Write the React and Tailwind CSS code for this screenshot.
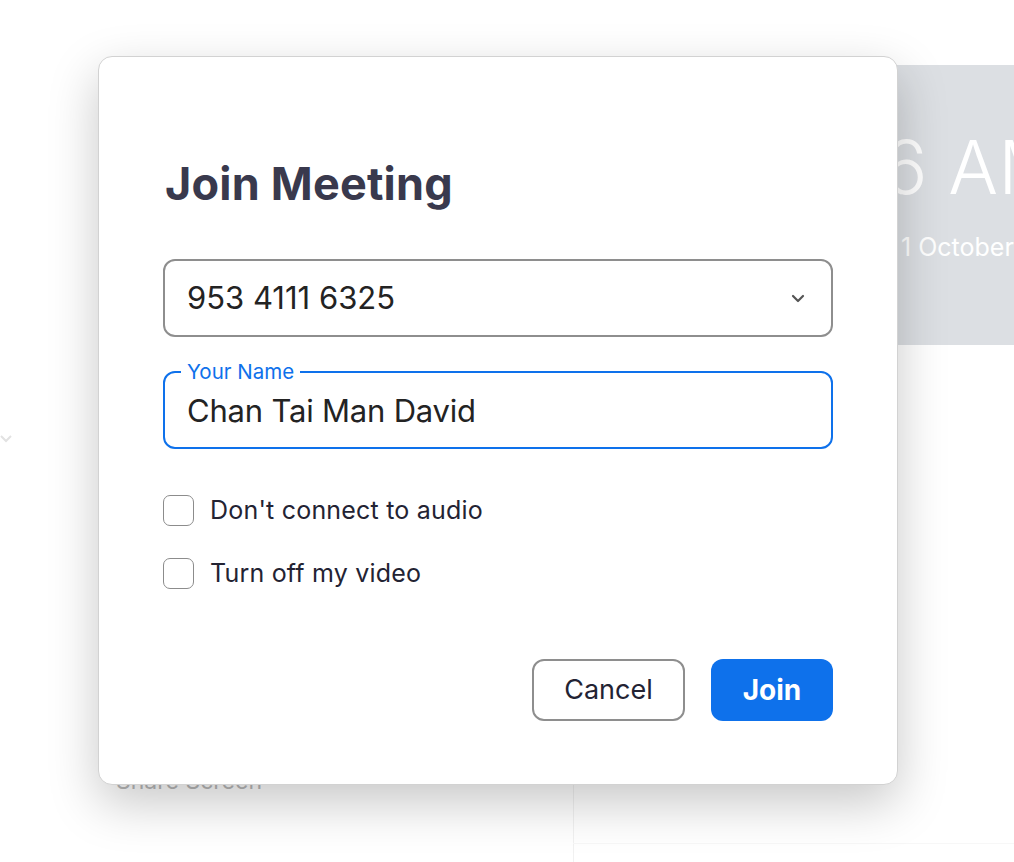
import React from 'react';

function Checkbox({ label }) {
  return (
    <label className="flex items-center gap-4 cursor-pointer">
      <span className="w-[31px] h-[31px] rounded-[7px] border-[1.5px] border-[#8c8c8c] bg-white" />
      <span className="text-[25px] leading-[31px] text-[#232333] tracking-[0.2px]">{label}</span>
    </label>
  );
}

export default function App() {
  return (
    <div
      className="relative w-[1014px] h-[862px] overflow-hidden bg-white"
      style={{ fontFamily: 'Inter, "Noto Sans", sans-serif' }}
    >
      {/* faded app behind the dialog */}
      <div className="absolute left-[560px] top-[65px] w-[480px] h-[280px] bg-[#dcdfe3]">
        <div className="absolute left-[323px] top-[65px] text-[74px] font-light text-white leading-none whitespace-nowrap">
          6 AM
        </div>
        <div className="absolute left-[341px] top-[170px] text-[25px] text-white leading-none whitespace-nowrap">
          1 October
        </div>
      </div>
      <div className="absolute left-[116px] top-[770px] text-[23px] text-[#b9b9b9] leading-none whitespace-nowrap">
        Share Screen
      </div>
      <div className="absolute left-[573px] top-[785px] w-px h-[80px] bg-[#f1f1f1]" />
      <div className="absolute left-[573px] top-[843px] w-[450px] h-px bg-[#f7f7f7]" />
      <svg className="absolute left-[0px] top-[434px]" width="12" height="10" viewBox="0 0 12 10">
        <path d="M1 2 L6 7 L11 2" fill="none" stroke="#e2e2e2" strokeWidth="2" />
      </svg>

      {/* dialog */}
      <div className="absolute left-[98px] top-[56px] w-[800px] h-[729px] rounded-[14px] bg-white border border-[#d2d2d2] shadow-[0_18px_50px_rgba(0,0,0,0.22)] px-[64px] pt-[104px]">
        <h1 className="pl-[2px] text-[45px] font-bold text-[#39394d] leading-none tracking-[0.2px]">
          Join Meeting
        </h1>

        <div className="mt-[53px] h-[78px] rounded-[12px] border-2 border-[#8e8e8e] flex items-center justify-between pl-[22px] pr-[26px]">
          <span className="text-[31px] text-[#232323]">953 4111 6325</span>
          <svg width="14" height="9" viewBox="0 0 14 9">
            <path d="M2 2 L7 7 L12 2" fill="none" stroke="#555" strokeWidth="2.2" strokeLinecap="round" strokeLinejoin="round" />
          </svg>
        </div>

        <div className="relative mt-[34px] h-[78px] rounded-[12px] border-2 border-[#0e71eb] flex items-center pl-[22px] pt-[2px]">
          <span className="absolute left-[16px] -top-[13px] bg-white px-[6px] text-[20.5px] text-[#0e71eb] leading-[24px]">
            Your Name
          </span>
          <span className="text-[31px] text-[#232323] tracking-[-0.2px]">Chan Tai Man David</span>
        </div>

        <div className="mt-[46px] flex flex-col gap-[32px]">
          <Checkbox label="Don't connect to audio" />
          <Checkbox label="Turn off my video" />
        </div>

        <div className="mt-[70px] flex justify-end gap-[26px]">
          <button className="w-[153px] h-[62px] rounded-[12px] border-2 border-[#8e8e8e] bg-white text-[27px] text-[#232333]">
            Cancel
          </button>
          <button className="w-[122px] h-[62px] rounded-[12px] bg-[#0e71eb] text-[28px] font-bold text-white">
            Join
          </button>
        </div>
      </div>
    </div>
  );
}
